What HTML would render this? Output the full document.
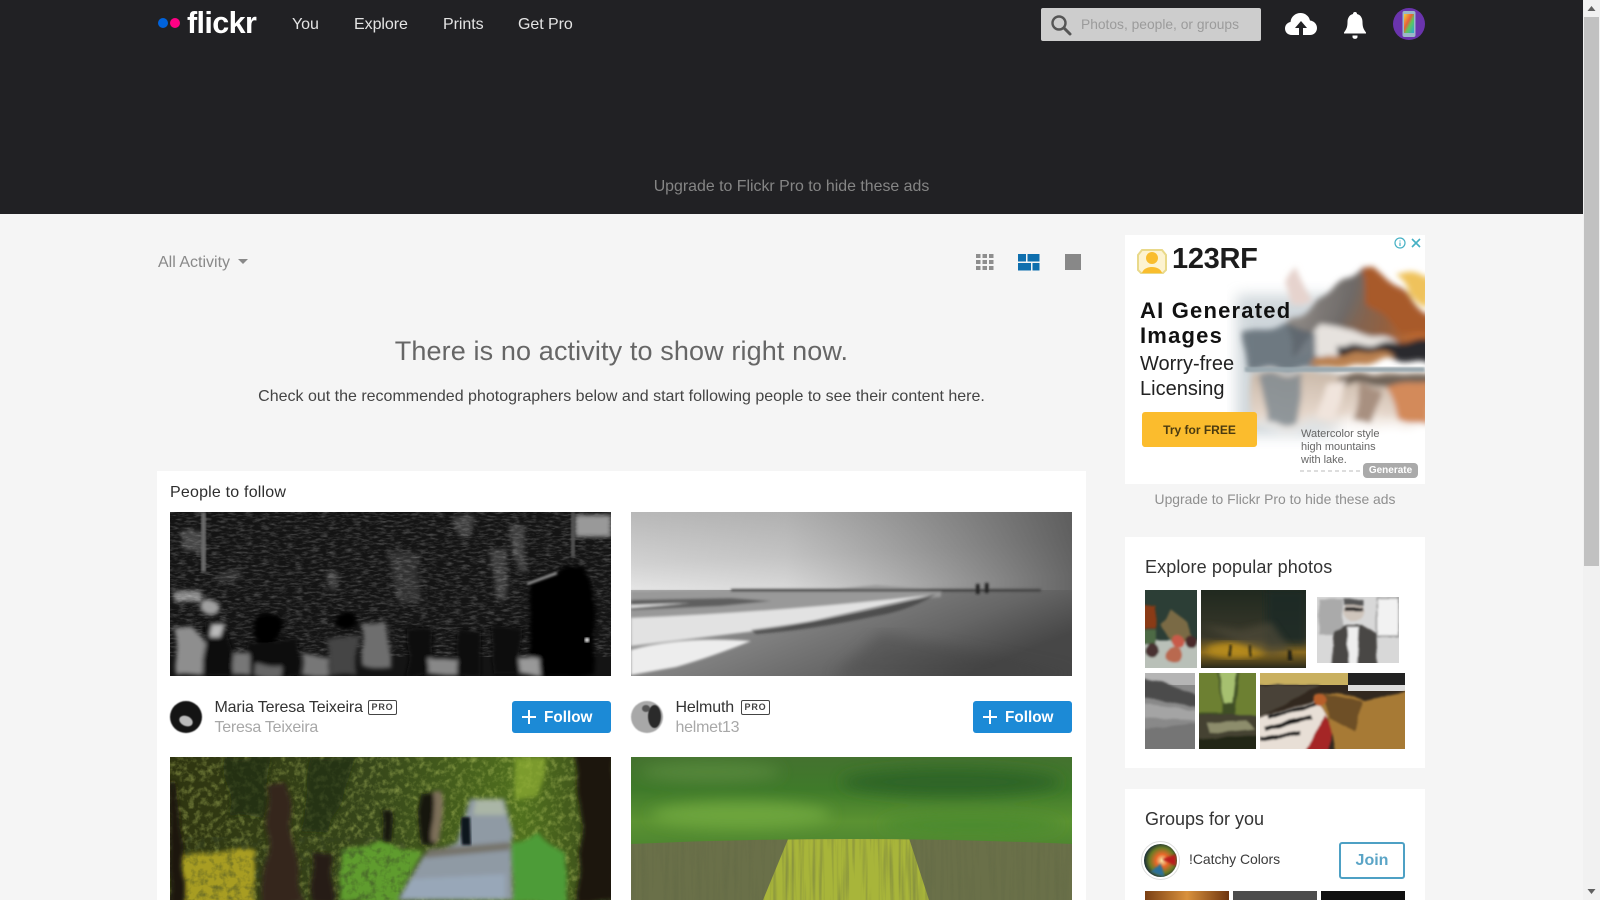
<!DOCTYPE html>
<html><head><meta charset="utf-8"><title>Flickr</title>
<style>
html,body{margin:0;padding:0;width:1600px;height:900px;overflow:hidden;background:#f5f5f5;font-family:"Liberation Sans",sans-serif}
.a{position:absolute;white-space:nowrap}
svg{position:absolute;display:block;overflow:hidden}
.nav{top:13px;line-height:24px;font-size:16px;color:#e4e4e4;letter-spacing:-.05px}
.name{font-size:16px;color:#333;line-height:20px;letter-spacing:-.15px}
.sub{font-size:16px;color:#a8a8a8;line-height:20px;letter-spacing:-.25px}
.pro{font-size:9px;font-weight:bold;letter-spacing:.8px;color:#444;border:1px solid #444;border-radius:2px;width:27px;height:13px;line-height:13px;text-align:center}
.btn{background:#1c8ad6;border-radius:3px;height:32px;width:99px}
.fol{line-height:20px;font-size:15.300px;font-weight:bold;color:#fff;top:708px}
</style></head><body>
<svg width="0" height="0" style="left:0;top:0"><defs>
<filter id="b1"><feGaussianBlur stdDeviation="1.200"/></filter>
<filter id="b2"><feGaussianBlur stdDeviation="2.500"/></filter>
<filter id="b3"><feGaussianBlur stdDeviation="3.500"/></filter>
<filter id="b6"><feGaussianBlur stdDeviation="7"/></filter>
<filter id="org" x="-5%" y="-5%" width="110%" height="110%"><feTurbulence type="fractalNoise" baseFrequency=".035" numOctaves="1" seed="5" result="n"/><feDisplacementMap in="SourceGraphic" in2="n" scale="12" xChannelSelector="R" yChannelSelector="G"/><feGaussianBlur stdDeviation="2.200"/></filter>
<filter id="orgm" x="-5%" y="-5%" width="110%" height="110%"><feTurbulence type="fractalNoise" baseFrequency=".04 .025" numOctaves="1" seed="8" result="n"/><feDisplacementMap in="SourceGraphic" in2="n" scale="20" xChannelSelector="R" yChannelSelector="G"/><feGaussianBlur stdDeviation="3"/></filter>
<filter id="orgs" x="-5%" y="-5%" width="110%" height="110%"><feTurbulence type="fractalNoise" baseFrequency=".08" numOctaves="1" seed="2" result="n"/><feDisplacementMap in="SourceGraphic" in2="n" scale="4" xChannelSelector="R" yChannelSelector="G"/><feGaussianBlur stdDeviation="1"/></filter>
<filter id="dk" x="0" y="0" width="100%" height="100%"><feTurbulence type="fractalNoise" baseFrequency=".14" numOctaves="3" seed="12"/><feColorMatrix values="0 0 0 0 .04 0 0 0 0 .06 0 0 0 0 .02 2.600 0 0 0 -1.150"/></filter>
</defs></svg>
<div class="a" style="left:0;top:0;width:1583px;height:214px;background:#212124"></div>
<div class="a" style="left:158px;top:18px;width:10px;height:10px;border-radius:50%;background:#0063dc"></div>
<div class="a" style="left:170px;top:18px;width:10px;height:10px;border-radius:50%;background:#ff0084"></div>
<div class="a" style="left:187px;top:4px;font-size:30.500px;line-height:38px;font-weight:bold;color:#fff;letter-spacing:-.6px">flickr</div>
<div class="a nav" style="left:292px">You</div>
<div class="a nav" style="left:354px">Explore</div>
<div class="a nav" style="left:443px">Prints</div>
<div class="a nav" style="left:518px">Get Pro</div>
<div class="a" style="left:1041px;top:8px;width:220px;height:33px;background:#cdcdcd;border-radius:2px"></div>
<svg style="left:1049px;top:13px" width="24" height="24" viewBox="0 0 24 24"><circle cx="10" cy="10" r="6.500" fill="none" stroke="#555" stroke-width="2.400"/><path d="M15 15l6 6" stroke="#555" stroke-width="3" stroke-linecap="round"/></svg>
<div class="a" style="left:1081px;top:15px;line-height:20px;font-size:13.800px;color:#9b9b9b">Photos, people, or groups</div>
<svg style="left:1284px;top:10px" width="34" height="28" viewBox="0 0 34 28"><path d="M8 25C3 25 1 21.500 1 18.500C1 15 3.500 12.500 6.500 12C7 6.500 11.500 3 16.500 3C21 3 25 6 26 10.500C30 11 33 14 33 18C33 22 30 25 26 25Z" fill="#fff"/><path d="M17 11l-6 7h4v8h4v-8h4z" fill="#212124"/></svg>
<svg style="left:1343px;top:10px" width="24" height="30" viewBox="0 0 24 30"><path d="M12 2C13.500 2 14 3 14 4C18 5 19.500 8.500 19.500 12C19.500 17 20.500 19 23 22.500V23.500H1V22.500C3.500 19 4.500 17 4.500 12C4.500 8.500 6 5 10 4C10 3 10.500 2 12 2Z" fill="#fff"/><path d="M9.500 25.500h5v1.500a2 1.500 0 0 1-5 0z" fill="#fff"/></svg>
<svg style="left:1393px;top:8px" width="32" height="32" viewBox="0 0 32 32"><defs><linearGradient id="ph" x1="0" y1="0" x2="1" y2="1"><stop offset="0" stop-color="#f2d03a"/><stop offset=".4" stop-color="#e8603a"/><stop offset=".6" stop-color="#5fc65a"/><stop offset="1" stop-color="#29a7d8"/></linearGradient></defs><circle cx="16" cy="16" r="16" fill="#6a34ad"/><rect x="9.500" y="3" width="13" height="26" rx="2" fill="#9bb8c9"/><rect x="11" y="6" width="10" height="19" fill="url(#ph)"/></svg>
<div class="a" style="left:0;top:177px;width:1583px;text-align:center;font-size:15.900px;line-height:20px;color:#858585">Upgrade to Flickr Pro to hide these ads</div>

<div class="a" style="left:1583px;top:0;width:17px;height:900px;background:#f1f1f1"></div>
<div class="a" style="left:1584px;top:17px;width:15px;height:549px;background:#c1c1c1"></div>
<svg style="left:1583px;top:0" width="17" height="900"><path d="M8.500 6l-4 5h8z" fill="#606060"/><path d="M4.500 889l4 5 4-5z" fill="#606060"/></svg>

<div class="a" style="left:158px;top:252px;font-size:16px;line-height:22px;color:#898989">All Activity</div>
<svg style="left:238px;top:259px" width="10" height="6"><path d="M0 0h10l-5 5z" fill="#898989"/></svg>
<svg style="left:976px;top:253px" width="18" height="18" fill="#8e8e8e"><rect x="0" y="1" width="4.500" height="4"/><rect x="6.500" y="1" width="4.500" height="4"/><rect x="13" y="1" width="4.500" height="4"/><rect x="0" y="7" width="4.500" height="4"/><rect x="6.500" y="7" width="4.500" height="4"/><rect x="13" y="7" width="4.500" height="4"/><rect x="0" y="13" width="4.500" height="4"/><rect x="6.500" y="13" width="4.500" height="4"/><rect x="13" y="13" width="4.500" height="4"/></svg>
<svg style="left:1018px;top:254px" width="22" height="17" fill="#0f6fae"><rect width="8" height="7.500"/><rect x="9.500" width="12" height="7.500"/><rect y="9" width="13" height="7.500"/><rect x="14.500" y="9" width="7" height="7.500"/></svg>
<div class="a" style="left:1065px;top:254px;width:16px;height:16px;background:#888"></div>

<div class="a" style="left:157px;top:333px;width:929px;text-align:center;font-size:27px;line-height:36px;color:#666;letter-spacing:.12px">There is no activity to show right now.</div>
<div class="a" style="left:157px;top:387px;width:929px;text-align:center;font-size:16px;line-height:20px;color:#444">Check out the recommended photographers below and start following people to see their content here.</div>

<div class="a" style="left:157px;top:471px;width:929px;height:429px;background:#fff"></div>
<div class="a" style="left:170px;top:482px;font-size:16px;line-height:22px;color:#2e2e2e;letter-spacing:.2px">People to follow</div>

<!-- photo 1 -->
<svg style="left:170px;top:512px" width="441" height="164" viewBox="0 0 441 164">
<defs><filter id="tx" x="0" y="0" width="100%" height="100%"><feTurbulence type="fractalNoise" baseFrequency=".12 .45" numOctaves="3" seed="4"/><feColorMatrix values="0 0 0 0 1 0 0 0 0 1 0 0 0 0 1 1.600 0 0 0 -.68"/></filter></defs>
<rect width="441" height="164" fill="#141414"/>
<g filter="url(#org)" fill="#5c5c5c">
<path d="M337 15h20v45h-8z" opacity=".6"/><path d="M283 5h24l-4 20h-12z" opacity=".6"/><path d="M320 35h17v55h-10z" opacity=".6"/><path d="M217 41h33v50h-22z" opacity=".4"/><path d="M157 61h13v17h-8z" opacity=".6"/><path d="M13 18h20v23h-20z" opacity=".7"/><path d="M3 78h30v13H3z" fill="#8a8a8a"/><path d="M50 60h22v10H50z" opacity=".4"/>
</g>
<rect width="441" height="145" filter="url(#tx)" opacity=".32"/>
<path d="M405 3h36v22h-36z" fill="#999" filter="url(#b2)"/>
<rect x="31" y="0" width="5" height="60" fill="#6a6a6a" filter="url(#b1)"/>
<rect x="401" y="0" width="4" height="45" fill="#555" filter="url(#b1)"/>
<g filter="url(#org)">
<path d="M357 70l30-9 8-8 18 2 7 15 5 25 0 69h-62l-6-50z" fill="#040404"/>
<circle cx="40" cy="95" r="9" fill="#a0a0a0"/>
<path d="M4 117l18-3 12 17-2 33H8z" fill="#8e8e8e"/>
<path d="M35 110l20 0 12 54H33z" fill="#0e0e0e"/>
<path d="M42 112l12 0-4 12h-12z" fill="#bbb"/>
<circle cx="98" cy="115" r="15" fill="#050505"/><path d="M78 128h52v36H75z" fill="#080808"/>
<path d="M63 142h17v22H63z" fill="#777"/><path d="M85 152h25v12H85z" fill="#666"/><path d="M133 143h24v21h-24z" fill="#777"/>
<circle cx="175" cy="108" r="10" fill="#060606"/><path d="M158 126h30v38h-30z" fill="#444"/>
<path d="M190 112l28-2 4 44h-28z" fill="#6e6e6e"/>
<path d="M237 116h26v48h-26z" fill="#090909"/>
<path d="M287 118h23v46h-23z" fill="#0a0a0a"/><path d="M323 115h27v49h-27z" fill="#080808"/>
<path d="M257 147h30v17h-30z" fill="#888"/><path d="M350 147h20v17h-20z" fill="#999"/>
</g>
<path d="M357 72l30-11" stroke="#aaa" stroke-width="2.500" filter="url(#b1)"/>
<circle cx="417" cy="128" r="2.500" fill="#eee" filter="url(#b1)"/>
</svg>

<!-- photo 2 -->
<svg style="left:631px;top:512px" width="441" height="164" viewBox="0 0 441 164">
<defs><linearGradient id="sky" x1="0" y1="0" x2=".3" y2="1"><stop offset="0" stop-color="#b8b8b8"/><stop offset=".6" stop-color="#d2d2d2"/><stop offset="1" stop-color="#ececec"/></linearGradient>
<linearGradient id="skyr" x1="0" y1="0" x2="1" y2="0"><stop offset="0" stop-color="#555" stop-opacity="0"/><stop offset=".35" stop-color="#555" stop-opacity=".12"/><stop offset="1" stop-color="#444" stop-opacity=".8"/></linearGradient>
<linearGradient id="sand" x1="0" y1="0" x2="1" y2=".5"><stop offset="0" stop-color="#b0b0b0"/><stop offset=".4" stop-color="#858585"/><stop offset=".75" stop-color="#666"/><stop offset="1" stop-color="#474747"/></linearGradient></defs>
<rect width="441" height="80" fill="url(#sky)"/><rect width="441" height="80" fill="url(#skyr)"/>
<rect y="78" width="441" height="86" fill="url(#sand)"/>
<path d="M250 120l190 40v4H200z" fill="#3c3c3c" opacity=".35" filter="url(#b6)"/>
<g filter="url(#b1)">
<path d="M0 79h310v6L220 92 120 100 0 106z" fill="#999"/>
<path d="M0 88l100-2 40 3-50 5-90 4z" fill="#5e5e5e"/><path d="M0 93l60-2-60 5z" fill="#e8e8e8"/>
<path d="M0 106Q150 100 300 83Q240 96 150 116L0 134z" fill="#e2e2e2"/>
<path d="M120 118Q230 104 305 82Q280 98 245 104Q180 118 125 122z" fill="#3a3a3a" opacity=".7"/>
<path d="M0 138Q50 124 120 129Q80 145 45 155L0 163z" fill="#ededed"/>
<path d="M100 77h310v2.500H100z" fill="#3f3f3f"/>
<path d="M205 77l40-4 55 4z" fill="#9a9a9a"/>
<rect x="345" y="72" width="3.500" height="10" fill="#1c1c1c"/><rect x="354" y="71" width="3.500" height="10" fill="#1c1c1c"/>
</g></svg>

<div class="a" style="left:170px;top:701px;width:32px;height:32px;border-radius:50%;overflow:hidden;background:#141414;filter:blur(.5px)"><div class="a" style="left:9px;top:15px;width:14px;height:10px;border-radius:50%;background:#bbb;transform:rotate(25deg)"></div></div>
<div class="a name" style="left:214.500px;top:698px">Maria Teresa Teixeira</div>
<div class="a pro" style="left:368px;top:700px">PRO</div>
<div class="a sub" style="left:214.500px;top:717.500px">Teresa Teixeira</div>
<div class="a btn" style="left:512px;top:701px"></div>
<svg style="left:521px;top:709px" width="16" height="16"><path d="M8 1v14M1 8h14" stroke="#fff" stroke-width="2"/></svg>
<div class="a fol" style="left:544px">Follow</div>

<div class="a" style="left:631px;top:701px;width:32px;height:32px;border-radius:50%;overflow:hidden;background:#a8a8a8;filter:blur(.6px)"><div class="a" style="left:17px;top:4px;width:13px;height:23px;border-radius:50%;background:#2a2a2a"></div><div class="a" style="left:11px;top:4px;width:8px;height:7px;border-radius:50%;background:#555"></div></div>
<div class="a name" style="left:675.500px;top:698px">Helmuth</div>
<div class="a pro" style="left:741px;top:700px">PRO</div>
<div class="a sub" style="left:675.500px;top:717.500px">helmet13</div>
<div class="a btn" style="left:973px;top:701px"></div>
<svg style="left:982px;top:709px" width="16" height="16"><path d="M8 1v14M1 8h14" stroke="#fff" stroke-width="2"/></svg>
<div class="a fol" style="left:1005px">Follow</div>

<!-- photo 3 -->
<svg style="left:170px;top:757px" width="441" height="143" viewBox="0 0 441 143">
<defs><filter id="leaf" x="0" y="0" width="100%" height="100%"><feTurbulence type="fractalNoise" baseFrequency=".16" numOctaves="3" seed="9"/><feColorMatrix values="0 0 0 0 .6 0 0 0 0 .7 0 0 0 0 .16 2 0 0 0 -.9"/></filter>
<linearGradient id="can" x1="0" y1="0" x2="1" y2="0"><stop offset="0" stop-color="#2e3410"/><stop offset=".45" stop-color="#36461a"/><stop offset=".8" stop-color="#50701e"/><stop offset="1" stop-color="#38481a"/></linearGradient></defs>
<rect width="441" height="143" fill="url(#can)"/>
<rect width="441" height="143" filter="url(#leaf)" opacity=".5"/>
<g filter="url(#org)">
<path d="M10 100l75-8v55H10z" fill="#a89d20"/>
<path d="M170 92l40-6 40 10-22 50h-58z" fill="#5f9c2f"/>
<path d="M342 86l25-8 30 20v48h-55z" fill="#4e9c38"/>
<path d="M140 0h45l-25 75h-30zM55 0h45l-5 60H60z" fill="#202a0c" opacity=".65"/>
<path d="M345 0h30l-5 40h-25z" fill="#8fae32" opacity=".7"/>
</g>
<rect x="0" y="80" width="240" height="63" filter="url(#dk)" opacity=".5"/>
<g filter="url(#org)">
<path d="M212 55h10v32h-10zM250 36h17v52h-17z" fill="#171710"/>
<path d="M262 36h8v48h-8z" fill="#7d705a"/>
<path d="M98 30l18-5 5 45 13 78H90l8-65z" fill="#35281c"/>
<path d="M144 95h18l2 50h-22z" fill="#281d12"/>
<path d="M0 25h6l9 122H0z" fill="#1c1810"/>
<path d="M404 -5h42v150h-40l6-75z" fill="#1a140e"/>
</g>
<g filter="url(#b2)">
<path d="M300 42h34l9 35-2 8 2 58H228l26-45 33-12z" fill="#8f9aa4"/>
<path d="M306 42h26l4 16h-33z" fill="#aab6a6"/>
<path d="M258 92l82-7v8l-86 8z" fill="#76736a"/>
<path d="M240 122l95-5v26H228z" fill="#98a7b8"/>
</g>
<path d="M291 60h9l1 28h-9l-1-10z" fill="#10141c" filter="url(#b1)"/>
</svg>

<!-- photo 4 -->
<svg style="left:631px;top:757px" width="441" height="143" viewBox="0 0 441 143">
<defs><linearGradient id="gf" x1="0" y1="0" x2="0" y2="1"><stop offset="0" stop-color="#44722f"/><stop offset=".35" stop-color="#3f7a2a"/><stop offset=".7" stop-color="#5b9232"/><stop offset="1" stop-color="#4c8530"/></linearGradient>
<filter id="str" x="0" y="0" width="100%" height="100%"><feTurbulence type="fractalNoise" baseFrequency=".28 .012" numOctaves="2" seed="3"/><feColorMatrix values="0 0 0 0 .12 0 0 0 0 .14 0 0 0 0 .06 2.200 0 0 0 -1"/></filter>
<clipPath id="fld"><path d="M0 87Q220 77 441 87V143H0z"/></clipPath></defs>
<rect width="441" height="92" fill="url(#gf)"/>
<g filter="url(#b6)"><ellipse cx="110" cy="58" rx="90" ry="13" fill="#6da53d"/><ellipse cx="320" cy="25" rx="110" ry="14" fill="#2f6525"/><ellipse cx="80" cy="15" rx="70" ry="10" fill="#55863a"/><ellipse cx="340" cy="68" rx="90" ry="10" fill="#4c8a2f"/></g>
<g clip-path="url(#fld)"><rect y="70" width="441" height="73" fill="#6a7049"/>
<path d="M160 75H276L298 143H132z" fill="#a8b53a"/>
<rect y="70" width="441" height="73" filter="url(#str)" opacity=".55"/></g>
</svg>

<!-- AD -->
<div class="a" style="left:1125px;top:235px;width:300px;height:249px;background:#fff;overflow:hidden">
<svg style="left:0;top:0" width="300" height="249" viewBox="0 0 300 249">
<defs><linearGradient id="m1" x1="0" y1="0" x2="1" y2=".2"><stop offset="0" stop-color="#a09a95"/><stop offset=".45" stop-color="#6e6a68"/><stop offset=".75" stop-color="#94603e"/><stop offset="1" stop-color="#c06a30"/></linearGradient>
<linearGradient id="rf" x1="0" y1="0" x2="0" y2="1"><stop offset="0" stop-color="#c9b8a8"/><stop offset=".6" stop-color="#e5d6ca"/><stop offset="1" stop-color="#fff" stop-opacity="0"/></linearGradient></defs>
<path d="M112 60h100v140H112z" fill="#bcc6cc" opacity=".7" filter="url(#b6)"/>
<g filter="url(#orgm)">
<path d="M158 50l10-18 22 30-20 10z" fill="#e6d3cd"/>
<path d="M272 38l32 4v30l-18-8z" fill="#efc25c"/>
<path d="M165 92l30-30 20-12 25-20 24 24 44 36v28L165 118z" fill="url(#m1)"/>
<path d="M238 32l10-2 60 55v20l-38-8-28-32z" fill="#a85a2c"/>
<path d="M195 92l40 6 35 10v12h-100z" fill="#e6e2de"/>
<path d="M120 100l45-8 25 10v32h-70z" fill="#56626c" opacity=".8"/>
<path d="M215 112l93-6v20h-93z" fill="#2a2a2e"/>
<path d="M190 122l60-6 20 8-30 7h-55z" fill="#b98050"/>
<path d="M125 138h183v55l-98 10-60-2-25-15z" fill="url(#rf)"/>
<path d="M135 140h45l-8 45-30 2z" fill="#7b868d" opacity=".8"/>
<path d="M215 140h93v10h-93z" fill="#6f6358"/>
<path d="M262 150l46-2v42l-36-8z" fill="#d38a5a"/>
<path d="M200 150l22-6-8 40h-18z" fill="#f0e4dc"/>
<path d="M235 150l22 4-12 34-18-2z" fill="#a89080"/>
</g>
<path d="M120 132h180v5H120z" fill="#99a7ae" filter="url(#b1)"/>
<path d="M175 236h100" stroke="#bbb" stroke-dasharray="4 3"/>
<path d="M13 20l4-5h20l4 5v15l-3 3H16l-3-3z" fill="#fdf3d0" stroke="#e9d98a" stroke-width="2"/>
<circle cx="27" cy="23" r="6" fill="#f9bd2d"/><path d="M17 38c2-8 18-8 20 0z" fill="#f9bd2d"/>
<circle cx="275" cy="8" r="5" fill="none" stroke="#45b0c4" stroke-width="1.200"/><path d="M275 5.500v1M275 7.500v3.500" stroke="#45b0c4" stroke-width="1.200"/>
<path d="M287 4l8 8M295 4l-8 8" stroke="#45b0c4" stroke-width="1.600"/>
</svg>
<div class="a" style="left:47px;top:6px;font-size:29px;line-height:36px;font-weight:bold;color:#1c1c1c;letter-spacing:-.3px">123RF</div>
<div class="a" style="left:15px;top:63px;font-size:22px;line-height:26px;font-weight:bold;color:#111;letter-spacing:1.200px">AI Generated</div>
<div class="a" style="left:15px;top:88px;font-size:22px;line-height:26px;font-weight:bold;color:#111;letter-spacing:1.200px">Images</div>
<div class="a" style="left:15px;top:117px;font-size:20px;line-height:24px;color:#222">Worry-free</div>
<div class="a" style="left:15px;top:142px;font-size:20px;line-height:24px;color:#222">Licensing</div>
<div class="a" style="left:17px;top:177px;width:115px;height:35px;border-radius:3px;background:#fbbc2d;text-align:center;line-height:36px;font-size:12px;font-weight:bold;color:#4a3a10">Try for FREE</div>
<div class="a" style="left:176px;top:193px;font-size:11px;line-height:13px;color:#666;white-space:pre">Watercolor style
high mountains
with lake.</div>
<div class="a" style="left:238px;top:228px;width:55px;height:15px;border-radius:4px;background:#aaa;color:#fff;font-size:10px;font-weight:bold;line-height:15px;text-align:center">Generate</div>
</div>
<div class="a" style="left:1125px;top:490px;width:300px;text-align:center;font-size:13.900px;line-height:18px;color:#8f8f8f">Upgrade to Flickr Pro to hide these ads</div>

<!-- explore -->
<div class="a" style="left:1125px;top:537px;width:300px;height:231px;background:#fff"></div>
<div class="a" style="left:1145px;top:556px;font-size:18px;line-height:23px;color:#333;letter-spacing:.1px">Explore popular photos</div>
<svg style="left:1145px;top:590px" width="52" height="78" viewBox="0 0 52 78"><rect width="52" height="78" fill="#2c3e36"/><g filter="url(#orgs)"><rect x="-5" y="50" width="62" height="33" fill="#b9c0b8"/><rect x="-3" y="15" width="14" height="24" fill="#8a3a18"/><rect x="-3" y="40" width="14" height="14" fill="#4d6a45"/><path d="M15 34l12-14 16 12 5 18-20 4z" fill="#7a6a44"/><circle cx="33" cy="52" r="6" fill="#c85a48"/><circle cx="29" cy="65" r="8" fill="#b9694f"/><circle cx="7" cy="60" r="7" fill="#4a3030"/><circle cx="46" cy="52" r="6" fill="#4a2c2a"/></g></svg>
<svg style="left:1201px;top:590px" width="105" height="78" viewBox="0 0 105 78"><defs><linearGradient id="fo" x1="0" y1="0" x2="0" y2="1"><stop offset="0" stop-color="#20291f"/><stop offset=".6" stop-color="#39382a"/><stop offset=".8" stop-color="#8a6a1f"/><stop offset="1" stop-color="#2a2a1c"/></linearGradient></defs><rect width="105" height="78" fill="url(#fo)"/><rect x="65" width="40" height="55" fill="#1e2a25" opacity=".8" filter="url(#b3)"/><ellipse cx="35" cy="60" rx="30" ry="8" fill="#b58a1c" filter="url(#b3)"/><path d="M0 35L40 40 70 32 90 60l-20 5-30-12z" fill="#4e4a38" opacity=".7" filter="url(#b3)"/><path d="M87 60h4v10h-4zM48 55h2v12h-2zM28 55h2v12h-2z" fill="#1d1a12" filter="url(#orgs)"/></svg>
<svg style="left:1317px;top:597px" width="82" height="66" viewBox="0 0 82 66"><rect width="82" height="66" fill="#d8d8d8"/><g filter="url(#orgs)"><rect x="60" y="1" width="22" height="38" fill="#f2f2f2" stroke="#555"/><rect x="2" y="2" width="24" height="36" fill="#aaa"/><path d="M15 70l2-36 10-6h18l14 8 1 34z" fill="#4a4644"/><path d="M30 30h12l-2 40h-8z" fill="#eee"/><circle cx="37" cy="14" r="10" fill="#cfc5bc"/><rect x="27" y="2" width="20" height="6" fill="#555"/><rect x="28" y="10" width="18" height="4" fill="#222"/></g></svg>
<svg style="left:1145px;top:673px" width="50" height="76" viewBox="0 0 50 76"><rect width="50" height="76" fill="#898989"/><rect width="50" height="12" fill="#b5b5b5"/><g filter="url(#orgs)"><path d="M-5 5l25 5 35 14v10L-5 24z" fill="#4c4c4c"/><path d="M-5 30l60 8v10L-5 45z" fill="#a4a4a4"/><path d="M-5 56l60-6v31H-5z" fill="#757575"/></g></svg>
<svg style="left:1199px;top:673px" width="57" height="76" viewBox="0 0 57 76"><rect width="57" height="76" fill="#3f4e25"/><g filter="url(#orgs)"><path d="M-3 -3h21l6 43H-3zM40 -3h20v45H36z" fill="#6d8030"/><path d="M20 -3h18l-4 33h-10z" fill="#a6c070"/><path d="M-3 42h63v37H-3z" fill="#454331"/><path d="M8 50l40-2 8 8-45 4z" fill="#8d8d6c"/><path d="M-3 66l63-4v17H-3z" fill="#222618"/></g></svg>
<svg style="left:1260px;top:673px" width="145" height="76" viewBox="0 0 145 76"><rect width="145" height="76" fill="#32281f"/><rect width="90" height="12" fill="#c9b060"/><rect x="88" width="57" height="12" fill="#222"/><rect x="88" y="12" width="57" height="6" fill="#ddd"/><g filter="url(#orgs)"><path d="M-3 12L60 12 -3 46z" fill="#4a4338"/><path d="M-3 46L62 26l8 28-25 25H-3z" fill="#e8dfd6"/><path d="M8 45l50-15M4 56l48-12M0 66l40-6" stroke="#111" stroke-width="4"/><path d="M45 79l20-37 8 12-5 25z" fill="#a52828"/><path d="M55 22q25-6 50 6l43-10v61H75l-5-30z" fill="#a77a36"/><path d="M62 20l40 8-6 30-26-12z" fill="#6e4f28"/><circle cx="60" cy="27" r="6" fill="#b85f2c"/></g></svg>

<!-- groups -->
<div class="a" style="left:1125px;top:789px;width:300px;height:111px;background:#fff"></div>
<div class="a" style="left:1145px;top:808px;font-size:18px;line-height:23px;color:#333">Groups for you</div>
<svg style="left:1141px;top:841px" width="39" height="39" viewBox="0 0 39 39"><defs><radialGradient id="cc" cx=".55" cy=".5" r=".55"><stop offset="0" stop-color="#f9e7a8"/><stop offset=".35" stop-color="#e8692a"/><stop offset=".7" stop-color="#6a7a24"/><stop offset="1" stop-color="#142a38"/></radialGradient></defs><circle cx="19.500" cy="19.500" r="19" fill="#fff" stroke="#ddd"/><circle cx="19.500" cy="19.500" r="16.500" fill="url(#cc)"/><path d="M22 19l13-6v12z" fill="#b91c1c" filter="url(#orgs)"/><path d="M19 22L9 31l14 4z" fill="#2a6f9a" filter="url(#orgs)"/></svg>
<div class="a" style="left:1189px;top:849px;font-size:14px;line-height:20px;color:#3b3b3b;letter-spacing:-.05px">!Catchy Colors</div>
<div class="a" style="left:1339px;top:842px;width:62px;height:33px;border:2px solid #4da0c4;border-radius:3px;text-align:center;line-height:33px;font-size:16px;font-weight:bold;color:#5aa4c6;background:#fff">Join</div>
<div class="a" style="left:1145px;top:891px;width:84px;height:9px;background:linear-gradient(90deg,#7a3f14,#d9913c 50%,#6e3510)"></div>
<div class="a" style="left:1233px;top:891px;width:84px;height:9px;background:#4d4d4d"></div>
<div class="a" style="left:1321px;top:891px;width:84px;height:9px;background:#101010"></div>
</body></html>
